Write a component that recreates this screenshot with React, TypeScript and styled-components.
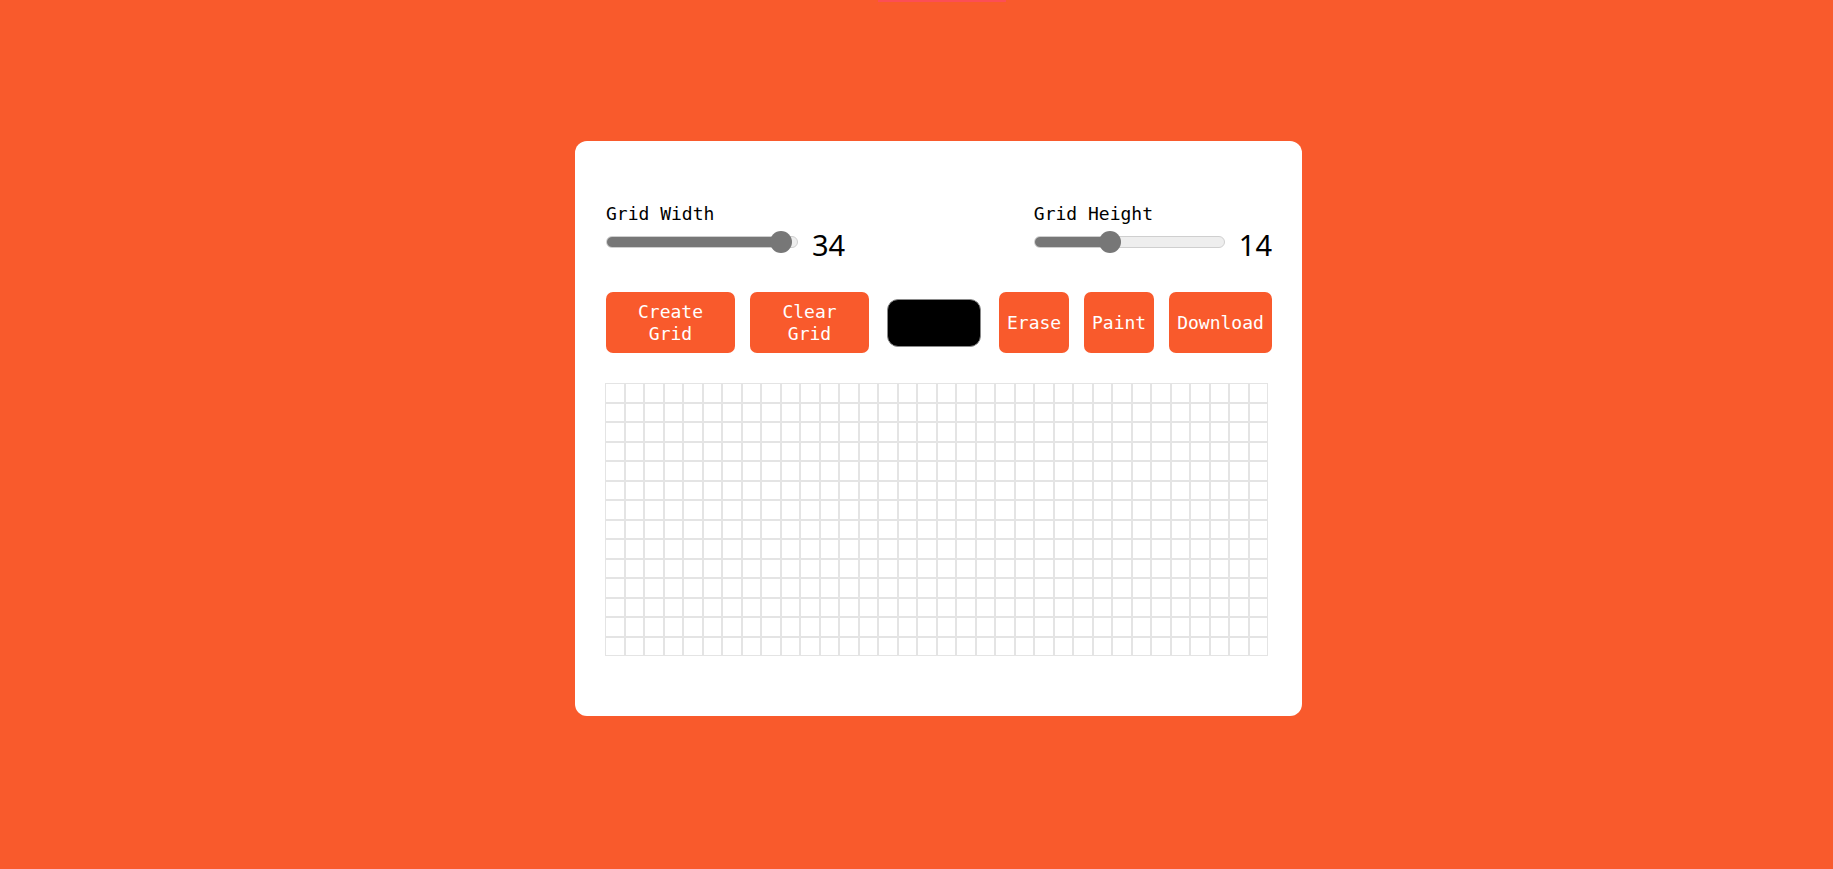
import React, { useState } from "react";
import styled, { createGlobalStyle } from "styled-components";

const ORANGE = "#f95a2c";

const Global = createGlobalStyle`
  html, body {
    margin: 0;
    padding: 0;
    background: ${ORANGE};
  }
  * { box-sizing: border-box; }
`;

const Page = styled.div`
  position: relative;
  min-height: 100vh;
  display: flex;
  justify-content: center;
  align-items: flex-start;
  padding: 141px 0 0 44px;
`;

const TopGlow = styled.div`
  position: absolute;
  top: 0;
  left: 878px;
  width: 128px;
  height: 2px;
  background: rgba(255, 70, 120, 0.55);
  filter: blur(0.5px);
`;

const Card = styled.div`
  width: 727px;
  background: #ffffff;
  border-radius: 12px;
  padding: 62px 30px 60px 30px;
  display: flex;
  flex-direction: column;
`;

const Controls = styled.div`
  display: flex;
  justify-content: space-between;
  align-items: flex-start;
  padding-left: 1px;
`;

const ControlGroup = styled.div`
  display: flex;
  flex-direction: column;
`;

const Label = styled.label`
  font-family: "DejaVu Sans Mono", "Liberation Mono", monospace;
  font-size: 18px;
  line-height: 21px;
  color: #000;
`;

const SliderRow = styled.div`
  display: flex;
  align-items: flex-start;
  gap: 14px;
  margin-top: 4px;
`;

const Range = styled.input`
  -webkit-appearance: none;
  appearance: none;
  width: ${(p) => p.width}px;
  height: 22px;
  margin: 3px 0 0 0;
  padding: 0;
  background: transparent;
  cursor: pointer;

  &::-webkit-slider-runnable-track {
    height: 12px;
    border-radius: 6px;
    border: 1px solid #cfcfcf;
    background: linear-gradient(
      to right,
      #777777 0,
      #777777 var(--fill),
      #eeeeee var(--fill),
      #eeeeee 100%
    );
  }
  &::-webkit-slider-thumb {
    -webkit-appearance: none;
    appearance: none;
    width: 22px;
    height: 22px;
    border-radius: 50%;
    background: #777777;
    border: none;
    margin-top: -6px;
  }
`;

const Value = styled.span`
  font-family: "Noto Sans", "Open Sans", sans-serif;
  font-size: 29px;
  line-height: 28px;
  margin-top: 3px;
  color: #000;
`;

const ButtonRow = styled.div`
  display: flex;
  align-items: center;
  gap: 15px;
  margin-top: 33px;
  padding-left: 1px;
`;

const Button = styled.button<{ $w: number }>`
  width: ${(p) => p.$w}px;
  height: 61px;
  border: none;
  border-radius: 7px;
  background: ${ORANGE};
  color: #ffffff;
  font-family: "DejaVu Sans Mono", "Liberation Mono", monospace;
  font-size: 18px;
  line-height: 22px;
  padding: 0 8px;
  text-align: center;
  cursor: pointer;
`;

const ColorInput = styled.input`
  -webkit-appearance: none;
  appearance: none;
  width: 94px;
  height: 48px;
  margin: 0 3px;
  padding: 0;
  border: none;
  background: transparent;
  cursor: pointer;

  &::-webkit-color-swatch-wrapper {
    padding: 0;
  }
  &::-webkit-color-swatch {
    border: 1px solid #8a8a8a;
    border-radius: 11px;
  }
`;

const Grid = styled.div<{ $cols: number; $rows: number }>`
  display: grid;
  grid-template-columns: repeat(${(p) => p.$cols}, 19.5px);
  grid-template-rows: repeat(${(p) => p.$rows}, 19.5px);
  margin-top: 30px;
  align-self: flex-start;
`;

const Cell = styled.div`
  border: 1px solid #e4e4e4;
  background: #ffffff;
`;

const MIN = 1;
const MAX = 35;

function fillFor(v: number, w: number) {
  const thumb = 22;
  const center = thumb / 2 + ((v - MIN) / (MAX - MIN)) * (w - thumb);
  return `${(center / w) * 100}%`;
}

export default function App() {
  const [gw, setGw] = useState(34);
  const [gh, setGh] = useState(14);
  const [color, setColor] = useState("#000000");
  const cells = Array.from({ length: gw * gh });

  return (
    <>
      <Global />
      <Page>
        <TopGlow />
        <Card>
          <Controls>
            <ControlGroup>
              <Label htmlFor="gw">Grid Width</Label>
              <SliderRow>
                <Range
                  id="gw"
                  type="range"
                  min={MIN}
                  max={MAX}
                  value={gw}
                  width={192}
                  onChange={(e) => setGw(Number(e.target.value))}
                  style={{ ["--fill" as any]: fillFor(gw, 192) }}
                />
                <Value>{gw}</Value>
              </SliderRow>
            </ControlGroup>
            <ControlGroup>
              <Label htmlFor="gh">Grid Height</Label>
              <SliderRow>
                <Range
                  id="gh"
                  type="range"
                  min={MIN}
                  max={MAX}
                  value={gh}
                  width={191}
                  onChange={(e) => setGh(Number(e.target.value))}
                  style={{ ["--fill" as any]: fillFor(gh, 191) }}
                />
                <Value>{gh}</Value>
              </SliderRow>
            </ControlGroup>
          </Controls>
          <ButtonRow>
            <Button $w={129}>Create Grid</Button>
            <Button $w={119}>Clear Grid</Button>
            <ColorInput
              type="color"
              value={color}
              onChange={(e) => setColor(e.target.value)}
            />
            <Button $w={70}>Erase</Button>
            <Button $w={70}>Paint</Button>
            <Button $w={103}>Download</Button>
          </ButtonRow>
          <Grid $cols={gw} $rows={gh}>
            {cells.map((_, i) => (
              <Cell key={i} />
            ))}
          </Grid>
        </Card>
      </Page>
    </>
  );
}
